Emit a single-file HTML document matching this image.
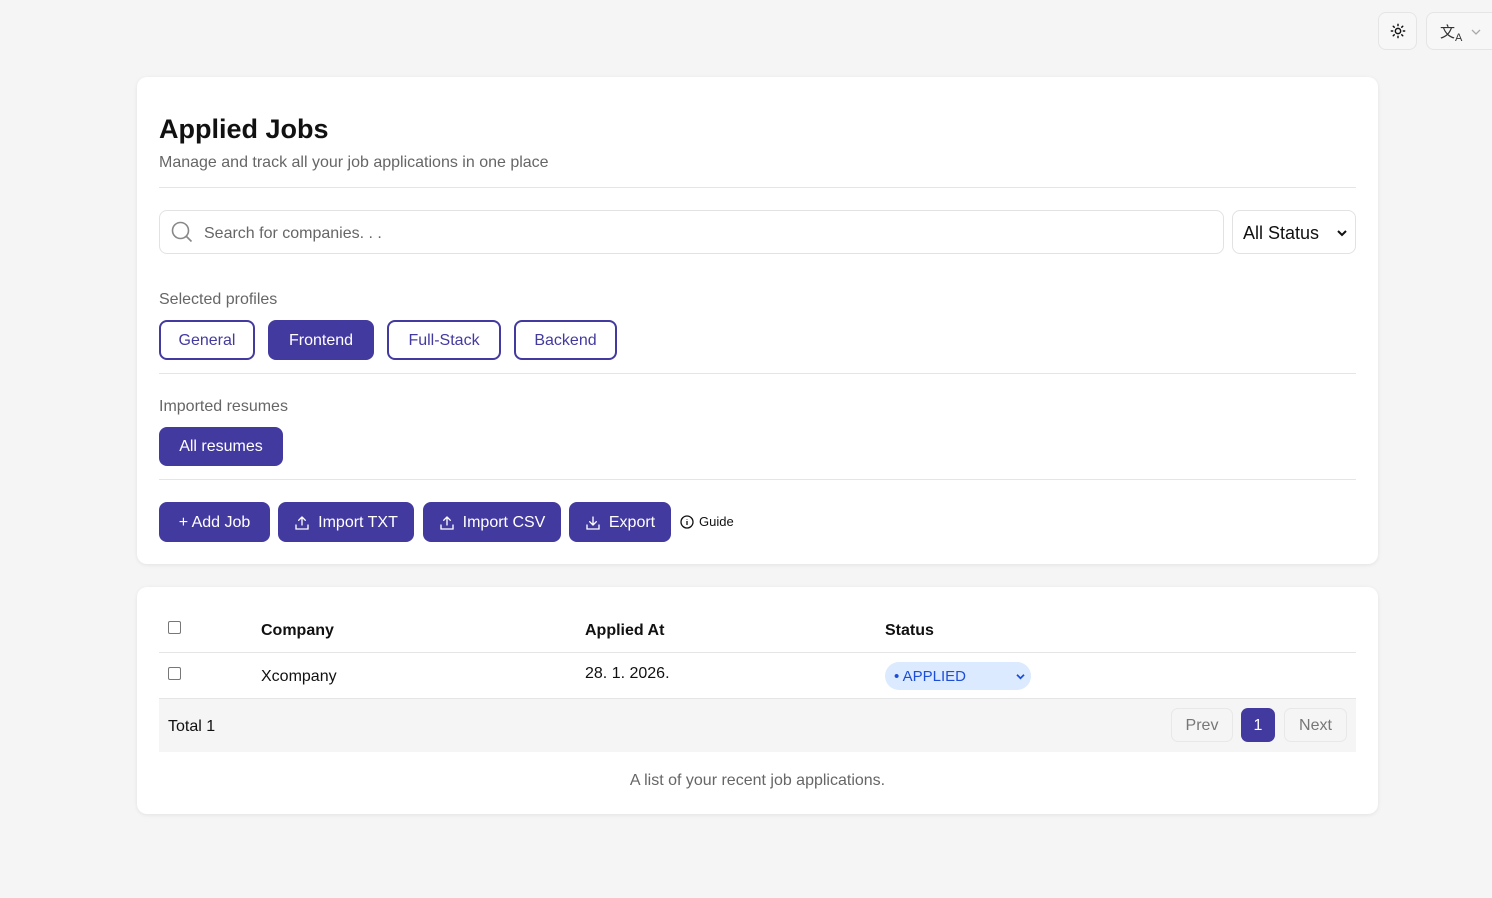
<!DOCTYPE html>
<html><head><style>
*{box-sizing:border-box;margin:0;padding:0}
body{width:1492px;height:898px;background:#f5f5f5;font-family:"Liberation Sans",sans-serif;position:relative;overflow:hidden;color:#111}
.card{position:absolute;left:137px;width:1241px;background:#fff;border-radius:10px;box-shadow:0 1px 4px rgba(0,0,0,.08)}
.btn{position:absolute;height:40px;border-radius:8px;background:#433a9f;color:#fff;font-size:16px;display:flex;align-items:center;justify-content:center;gap:8px;padding-top:1px}
.out{position:absolute;top:243px;height:40px;border-radius:8px;border:2px solid #433a9f;color:#433a9f;font-size:16px;display:flex;align-items:center;justify-content:center;padding-top:1px}
.hr{position:absolute;left:22px;right:22px;height:1px;background:#e5e5e5}
.lbl{position:absolute;left:22px;font-size:16px;color:#666}
.cb{position:absolute;width:13px;height:13px;border:1px solid #777;border-radius:2px;background:#fff}
</style></head><body>
<div style="position:absolute;left:1378px;top:12px;width:39px;height:38px;border:1px solid #e5e5e5;border-radius:8px;background:#f7f7f7;display:flex;align-items:center;justify-content:center">
<svg width="16" height="16" viewBox="0 0 24 24" fill="none" stroke="#111" stroke-width="2.2" stroke-linecap="round"><circle cx="12" cy="12" r="4"/><path d="M12 2v2M12 20v2M4.9 4.9l1.4 1.4M17.7 17.7l1.4 1.4M2 12h2M20 12h2M4.9 19.1l1.4-1.4M17.7 6.3l1.4-1.4"/></svg></div>
<div style="position:absolute;left:1426px;top:12px;width:80px;height:38px;border:1px solid #e5e5e5;border-radius:8px;background:#f7f7f7">
<span style="position:absolute;left:13px;top:8px;font-size:15px;color:#333">文<sub style="font-size:11px">A</sub></span>
<svg style="position:absolute;left:43px;top:13px" width="12" height="12" viewBox="0 0 12 12" fill="none" stroke="#aaa" stroke-width="1.3"><path d="M2 4l4 4 4-4"/></svg></div>

<div class="card" style="top:77px;height:487px">
<div style="position:absolute;left:22px;top:37px;font-size:27px;font-weight:bold">Applied Jobs</div>
<div style="position:absolute;left:22px;top:77px;font-size:16px;color:#666">Manage and track all your job applications in one place</div>
<div class="hr" style="top:110px"></div>
<div style="position:absolute;left:22px;top:133px;width:1065px;height:44px;border:1px solid #e2e2e2;border-radius:8px">
<svg style="position:absolute;left:10px;top:9px" width="24" height="24" viewBox="0 0 24 24" fill="none" stroke="#888" stroke-width="1.6"><circle cx="10.5" cy="10.5" r="8"/><path d="M16.5 16.5l5 5"/></svg>
<span style="position:absolute;left:44px;top:14px;font-size:16px;color:#666">Search for companies. . .</span></div>
<div style="position:absolute;left:1095px;top:133px;width:124px;height:44px;border:1px solid #e2e2e2;border-radius:8px;font-size:18px;padding:12px 0 0 10px">All Status
<svg style="position:absolute;right:8px;top:18px" width="10" height="8" viewBox="0 0 10 8" fill="none" stroke="#111" stroke-width="2"><path d="M1 2l4 4 4-4"/></svg></div>
<div class="lbl" style="top:214px">Selected profiles</div>
<div class="out" style="left:22px;width:96px">General</div>
<div class="btn" style="left:131px;top:243px;width:106px">Frontend</div>
<div class="out" style="left:250px;width:114px">Full-Stack</div>
<div class="out" style="left:377px;width:103px">Backend</div>
<div class="hr" style="top:296px"></div>
<div class="lbl" style="top:321px">Imported resumes</div>
<div class="btn" style="left:22px;top:350px;width:124px;height:39px">All resumes</div>
<div class="hr" style="top:402px"></div>
<div class="btn" style="left:22px;top:425px;width:111px">+ Add Job</div>
<div class="btn" style="left:141px;top:425px;width:136px"><svg width="16" height="16" viewBox="0 0 24 24" fill="none" stroke="#fff" stroke-width="2" stroke-linecap="round"><path d="M12 15V3M7 8l5-5 5 5M3 15v6h18v-6"/></svg>Import TXT</div>
<div class="btn" style="left:286px;top:425px;width:138px"><svg width="16" height="16" viewBox="0 0 24 24" fill="none" stroke="#fff" stroke-width="2" stroke-linecap="round"><path d="M12 15V3M7 8l5-5 5 5M3 15v6h18v-6"/></svg>Import CSV</div>
<div class="btn" style="left:432px;top:425px;width:102px"><svg width="16" height="16" viewBox="0 0 24 24" fill="none" stroke="#fff" stroke-width="2" stroke-linecap="round"><path d="M12 3v12M7 10l5 5 5-5M3 15v6h18v-6"/></svg>Export</div>
<div style="position:absolute;left:543px;top:437px;font-size:13px;display:flex;align-items:center;gap:5px"><svg width="14" height="14" viewBox="0 0 14 14" fill="none" stroke="#111" stroke-width="1.3"><circle cx="7" cy="7" r="6"/><path d="M7 6v4M7 4v.5"/></svg>Guide</div>
</div>

<div class="card" style="top:587px;height:227px">
<div class="cb" style="left:31px;top:34px"></div>
<div style="position:absolute;left:124px;top:35px;font-size:16px;font-weight:bold">Company</div>
<div style="position:absolute;left:448px;top:35px;font-size:16px;font-weight:bold">Applied At</div>
<div style="position:absolute;left:748px;top:35px;font-size:16px;font-weight:bold">Status</div>
<div class="hr" style="top:65px"></div>
<div class="cb" style="left:31px;top:80px"></div>
<div style="position:absolute;left:124px;top:81px;font-size:16px">Xcompany</div>
<div style="position:absolute;left:448px;top:78px;font-size:16px">28. 1. 2026.</div>
<div style="position:absolute;left:748px;top:75px;width:146px;height:28px;border-radius:14px;background:#dbeafe;color:#1d4ed8;font-size:15px;padding:6px 0 0 9px">• APPLIED
<svg style="position:absolute;right:6px;top:11px" width="9" height="7" viewBox="0 0 10 8" fill="none" stroke="#1d4ed8" stroke-width="2"><path d="M1 2l4 4 4-4"/></svg></div>
<div style="position:absolute;left:22px;right:22px;top:111px;height:54px;background:#f5f5f5;border-top:1px solid #e5e5e5">
<div style="position:absolute;left:9px;top:19px;font-size:16px">Total 1</div>
<div style="position:absolute;left:1012px;top:9px;width:62px;height:34px;border:1px solid #e8e8e8;border-radius:7px;color:#777;font-size:16px;text-align:center;line-height:34px">Prev</div>
<div style="position:absolute;left:1082px;top:9px;width:34px;height:34px;background:#433a9f;border-radius:7px;color:#fff;font-size:16px;text-align:center;line-height:35px">1</div>
<div style="position:absolute;left:1125px;top:9px;width:63px;height:34px;border:1px solid #e8e8e8;border-radius:7px;color:#777;font-size:16px;text-align:center;line-height:34px">Next</div>
</div>
<div style="position:absolute;left:0;right:0;top:185px;text-align:center;font-size:16px;color:#666">A list of your recent job applications.</div>
</div>
</body></html>
